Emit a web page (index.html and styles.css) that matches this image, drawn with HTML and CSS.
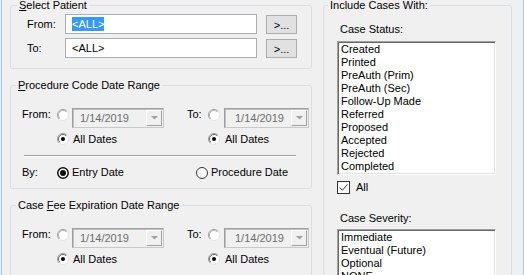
FILE: index.html
```html
<!DOCTYPE html>
<html lang="en">
<head>
    <meta charset="UTF-8">
    <title>Case Filter</title>
    <link rel="stylesheet" href="styles.css">
</head>
<body>
    <div class="frame">
        <div class="col-left">
            <fieldset class="group patient">
                <legend><u>S</u>elect Patient</legend>
                <div class="patient-row">
                    <span class="lbl">From:</span>
                    <div class="textbox"><span class="sel">&lt;ALL&gt;</span></div>
                    <button class="pick">&gt;...</button>
                </div>
                <div class="patient-row">
                    <span class="lbl">To:</span>
                    <div class="textbox">&lt;ALL&gt;</div>
                    <button class="pick">&gt;...</button>
                </div>
            </fieldset>

            <fieldset class="group range">
                <legend><u>P</u>rocedure Code Date Range</legend>
                <div class="range-row dates">
                    <div class="half half-from">
                        <span class="lbl">From:</span>
                        <span class="radio-cell"><svg class="rb" width="12" height="12" viewBox="0 0 12 12"><circle cx="6" cy="6" r="5.5" fill="#fff" stroke="#e3e3e3"/><path d="M2.1 9.9A5.5 5.5 0 0 1 9.9 2.1" fill="none" stroke="#a0a0a0"/><path d="M2.8 9.2A4.5 4.5 0 0 1 9.2 2.8" fill="none" stroke="#b4b4b4"/></svg></span>
                        <div class="combo combo-from">1/14/2019<span class="drop"><svg width="7" height="4" viewBox="0 0 7 4"><path d="M0 0h7L3.5 3.5z" fill="#a0a0a0"/></svg></span></div>
                    </div>
                    <div class="half half-to">
                        <span class="lbl">To:</span>
                        <span class="radio-cell"><svg class="rb" width="12" height="12" viewBox="0 0 12 12"><circle cx="6" cy="6" r="5.5" fill="#fff" stroke="#e3e3e3"/><path d="M2.1 9.9A5.5 5.5 0 0 1 9.9 2.1" fill="none" stroke="#a0a0a0"/><path d="M2.8 9.2A4.5 4.5 0 0 1 9.2 2.8" fill="none" stroke="#b4b4b4"/></svg></span>
                        <div class="combo combo-to">1/14/2019<span class="drop"><svg width="7" height="4" viewBox="0 0 7 4"><path d="M0 0h7L3.5 3.5z" fill="#a0a0a0"/></svg></span></div>
                    </div>
                </div>
                <div class="range-row all-row">
                    <div class="half half-from">
                        <span class="lbl"></span>
                        <span class="radio-cell"><svg class="rb" width="12" height="12" viewBox="0 0 12 12"><circle cx="6" cy="6" r="5.5" fill="#fff" stroke="#e3e3e3"/><path d="M2.1 9.9A5.5 5.5 0 0 1 9.9 2.1" fill="none" stroke="#a0a0a0"/><path d="M2.8 9.2A4.5 4.5 0 0 1 9.2 2.8" fill="none" stroke="#696969"/><circle cx="6" cy="6" r="2" fill="#000"/></svg></span>
                        <span class="opt">All Dates</span>
                    </div>
                    <div class="half half-to">
                        <span class="lbl"></span>
                        <span class="radio-cell"><svg class="rb" width="12" height="12" viewBox="0 0 12 12"><circle cx="6" cy="6" r="5.5" fill="#fff" stroke="#e3e3e3"/><path d="M2.1 9.9A5.5 5.5 0 0 1 9.9 2.1" fill="none" stroke="#a0a0a0"/><path d="M2.8 9.2A4.5 4.5 0 0 1 9.2 2.8" fill="none" stroke="#696969"/><circle cx="6" cy="6" r="2" fill="#000"/></svg></span>
                        <span class="opt">All Dates</span>
                    </div>
                </div>
                <div class="sep"></div>
                <div class="by-row">
                    <div class="by-left">
                        <span class="lbl">By:</span>
                        <span class="radio-cell"><svg width="12" height="12" viewBox="0 0 12 12"><circle cx="6" cy="6" r="5.2" fill="#fff" stroke="#111" stroke-width="1.5"/><circle cx="6" cy="6" r="3" fill="#111"/></svg></span>
                        <span>Entry Date</span>
                    </div>
                    <span class="radio-cell"><svg width="12" height="12" viewBox="0 0 12 12"><circle cx="6" cy="6" r="5.5" fill="#fff" stroke="#333"/></svg></span>
                    <span>Procedure Date</span>
                </div>
            </fieldset>

            <fieldset class="group range fee">
                <legend>Case <u>F</u>ee Expiration Date Range</legend>
                <div class="range-row dates">
                    <div class="half half-from">
                        <span class="lbl">From:</span>
                        <span class="radio-cell"><svg class="rb" width="12" height="12" viewBox="0 0 12 12"><circle cx="6" cy="6" r="5.5" fill="#fff" stroke="#e3e3e3"/><path d="M2.1 9.9A5.5 5.5 0 0 1 9.9 2.1" fill="none" stroke="#a0a0a0"/><path d="M2.8 9.2A4.5 4.5 0 0 1 9.2 2.8" fill="none" stroke="#b4b4b4"/></svg></span>
                        <div class="combo combo-from">1/14/2019<span class="drop"><svg width="7" height="4" viewBox="0 0 7 4"><path d="M0 0h7L3.5 3.5z" fill="#a0a0a0"/></svg></span></div>
                    </div>
                    <div class="half half-to">
                        <span class="lbl">To:</span>
                        <span class="radio-cell"><svg class="rb" width="12" height="12" viewBox="0 0 12 12"><circle cx="6" cy="6" r="5.5" fill="#fff" stroke="#e3e3e3"/><path d="M2.1 9.9A5.5 5.5 0 0 1 9.9 2.1" fill="none" stroke="#a0a0a0"/><path d="M2.8 9.2A4.5 4.5 0 0 1 9.2 2.8" fill="none" stroke="#b4b4b4"/></svg></span>
                        <div class="combo combo-to">1/14/2019<span class="drop"><svg width="7" height="4" viewBox="0 0 7 4"><path d="M0 0h7L3.5 3.5z" fill="#a0a0a0"/></svg></span></div>
                    </div>
                </div>
                <div class="range-row all-row">
                    <div class="half half-from">
                        <span class="lbl"></span>
                        <span class="radio-cell"><svg class="rb" width="12" height="12" viewBox="0 0 12 12"><circle cx="6" cy="6" r="5.5" fill="#fff" stroke="#e3e3e3"/><path d="M2.1 9.9A5.5 5.5 0 0 1 9.9 2.1" fill="none" stroke="#a0a0a0"/><path d="M2.8 9.2A4.5 4.5 0 0 1 9.2 2.8" fill="none" stroke="#696969"/><circle cx="6" cy="6" r="2" fill="#000"/></svg></span>
                        <span class="opt">All Dates</span>
                    </div>
                    <div class="half half-to">
                        <span class="lbl"></span>
                        <span class="radio-cell"><svg class="rb" width="12" height="12" viewBox="0 0 12 12"><circle cx="6" cy="6" r="5.5" fill="#fff" stroke="#e3e3e3"/><path d="M2.1 9.9A5.5 5.5 0 0 1 9.9 2.1" fill="none" stroke="#a0a0a0"/><path d="M2.8 9.2A4.5 4.5 0 0 1 9.2 2.8" fill="none" stroke="#696969"/><circle cx="6" cy="6" r="2" fill="#000"/></svg></span>
                        <span class="opt">All Dates</span>
                    </div>
                </div>
            </fieldset>
        </div>

        <div class="col-right">
            <fieldset class="group include">
                <legend>Include Cases With:</legend>
                <div class="cap">Case Status:</div>
                <div class="listbox">
                    <div>Created</div>
                    <div>Printed</div>
                    <div>PreAuth (Prim)</div>
                    <div>PreAuth (Sec)</div>
                    <div>Follow-Up Made</div>
                    <div>Referred</div>
                    <div>Proposed</div>
                    <div>Accepted</div>
                    <div>Rejected</div>
                    <div>Completed</div>
                </div>
                <div class="check-row">
                    <svg class="cb" width="13" height="13" viewBox="0 0 13 13"><rect x="0.5" y="0.5" width="12" height="12" fill="#fff" stroke="#333"/><path d="M2.5 6.5l2.8 2.8 5.2-6" fill="none" stroke="#333"/></svg>
                    <span>All</span>
                </div>
                <div class="cap severity">Case Severity:</div>
                <div class="listbox short">
                    <div>Immediate</div>
                    <div>Eventual (Future)</div>
                    <div>Optional</div>
                    <div>NONE</div>
                </div>
            </fieldset>
        </div>
    </div>
</body>
</html>
```

FILE: styles.css
```css
body {
    margin: 0;
    background: #f0f0f0;
    font-family: "Liberation Sans", Arial, sans-serif;
    font-size: 11px;
    color: #000;
    overflow: hidden;
}
.frame {
    box-sizing: border-box;
    width: 523px;
    height: 275px;
    margin-left: 1px;
    border-left: 1px solid #99c9ef;
    border-right: 1px solid #99c9ef;
    padding-left: 8px;
    display: flex;
    align-items: flex-start;
    gap: 11px;
    overflow: hidden;
}
.col-left {
    width: 302px;
    flex: none;
    display: flex;
    flex-direction: column;
    gap: 11px;
}
.col-right {
    width: 189px;
    flex: none;
}
.group {
    margin: 0;
    padding: 0;
    min-width: 0;
    border: 1px solid #d5dfe5;
    border-radius: 3px;
}
.group legend {
    padding: 0 2px;
    line-height: 11px;
}

/* select patient */
.patient {
    padding: 3px 0 10px 16px;
}
.patient legend {
    margin-left: -10px;
}
.patient-row {
    display: flex;
    align-items: center;
    height: 20px;
}
.patient-row + .patient-row {
    margin-top: 4px;
}
.patient .lbl {
    width: 38px;
}
.textbox {
    box-sizing: border-box;
    width: 192px;
    height: 20px;
    border: 1px solid #abadb3;
    background: #fff;
    padding-left: 6px;
    display: flex;
    align-items: center;
}
.sel {
    display: inline-block;
    line-height: 14px;
    background: #3399ff;
    color: #fff;
}
.pick {
    align-self: flex-start;
    width: 31px;
    height: 19px;
    margin: 1px 0 0 9px;
    padding: 0;
    border: 1px solid #adadad;
    background: #e1e1e1;
    font: inherit;
    color: #000;
}

/* date ranges */
.range {
    padding: 17px 0 9px 11px;
}
.range legend {
    margin-left: -6px;
}
.fee {
    padding-bottom: 30px;
}
.range-row {
    display: flex;
    align-items: flex-start;
    line-height: 13px;
}
.range-row.dates {
    height: 20px;
}
.all-row {
    margin-top: 5px;
}
.half {
    display: flex;
    align-items: flex-start;
}
.half-from {
    width: 165px;
}
.half-from .lbl {
    width: 35px;
}
.half-to .lbl {
    width: 21px;
}
.radio-cell {
    width: 15px;
    flex: none;
    display: flex;
}
.half-to .radio-cell {
    width: 16px;
}
.dates .radio-cell {
    margin-top: 1px;
}
.opt {
    padding-left: 1px;
}
.combo {
    box-sizing: border-box;
    height: 20px;
    border: 1px solid #a0a0a0;
    border-right-color: #c8c8c8;
    border-bottom-color: #c8c8c8;
    box-shadow: inset 1px 1px 0 #c0c0c0;
    background: #f0f0f0;
    color: #6d6d6d;
    display: flex;
    align-items: center;
    justify-content: space-between;
}
.combo-from {
    width: 92px;
    padding-left: 7px;
}
.combo-to {
    width: 85px;
    padding-left: 10px;
}
.drop {
    box-sizing: border-box;
    width: 16px;
    height: 16px;
    margin-right: 1px;
    border: 1px solid;
    border-color: #fff #a0a0a0 #a0a0a0 #fff;
    background: #f0f0f0;
    display: flex;
    align-items: center;
    justify-content: center;
}
.sep {
    width: 272px;
    margin: 9px 0 0 2px;
    border-top: 1px solid #a0a0a0;
    border-bottom: 1px solid #fff;
}
.by-row {
    display: flex;
    align-items: center;
    margin-top: 9px;
    line-height: 13px;
}
.by-left {
    display: flex;
    align-items: center;
    width: 174px;
}
.by-left .lbl {
    width: 35px;
}

/* include cases */
.include {
    padding: 12px 0 40px 13px;
}
.include legend {
    margin-left: -9px;
}
.cap {
    padding-left: 3px;
    line-height: 13px;
}
.listbox {
    box-sizing: border-box;
    width: 159px;
    margin-top: 5px;
    padding: 1px;
    border: 1px solid;
    border-color: #a0a0a0 #fff #fff #a0a0a0;
    box-shadow: inset 1px 1px 0 #696969, inset -1px -1px 0 #e3e3e3;
    background: #fff;
}
.listbox div {
    line-height: 13px;
    padding-left: 2px;
}
.listbox.short {
    height: 70px;
    margin-top: 4px;
}
.check-row {
    display: flex;
    align-items: center;
    margin-top: 6px;
    line-height: 13px;
}
.cb {
    margin-right: 6px;
}
.severity {
    margin-top: 18px;
}
```
